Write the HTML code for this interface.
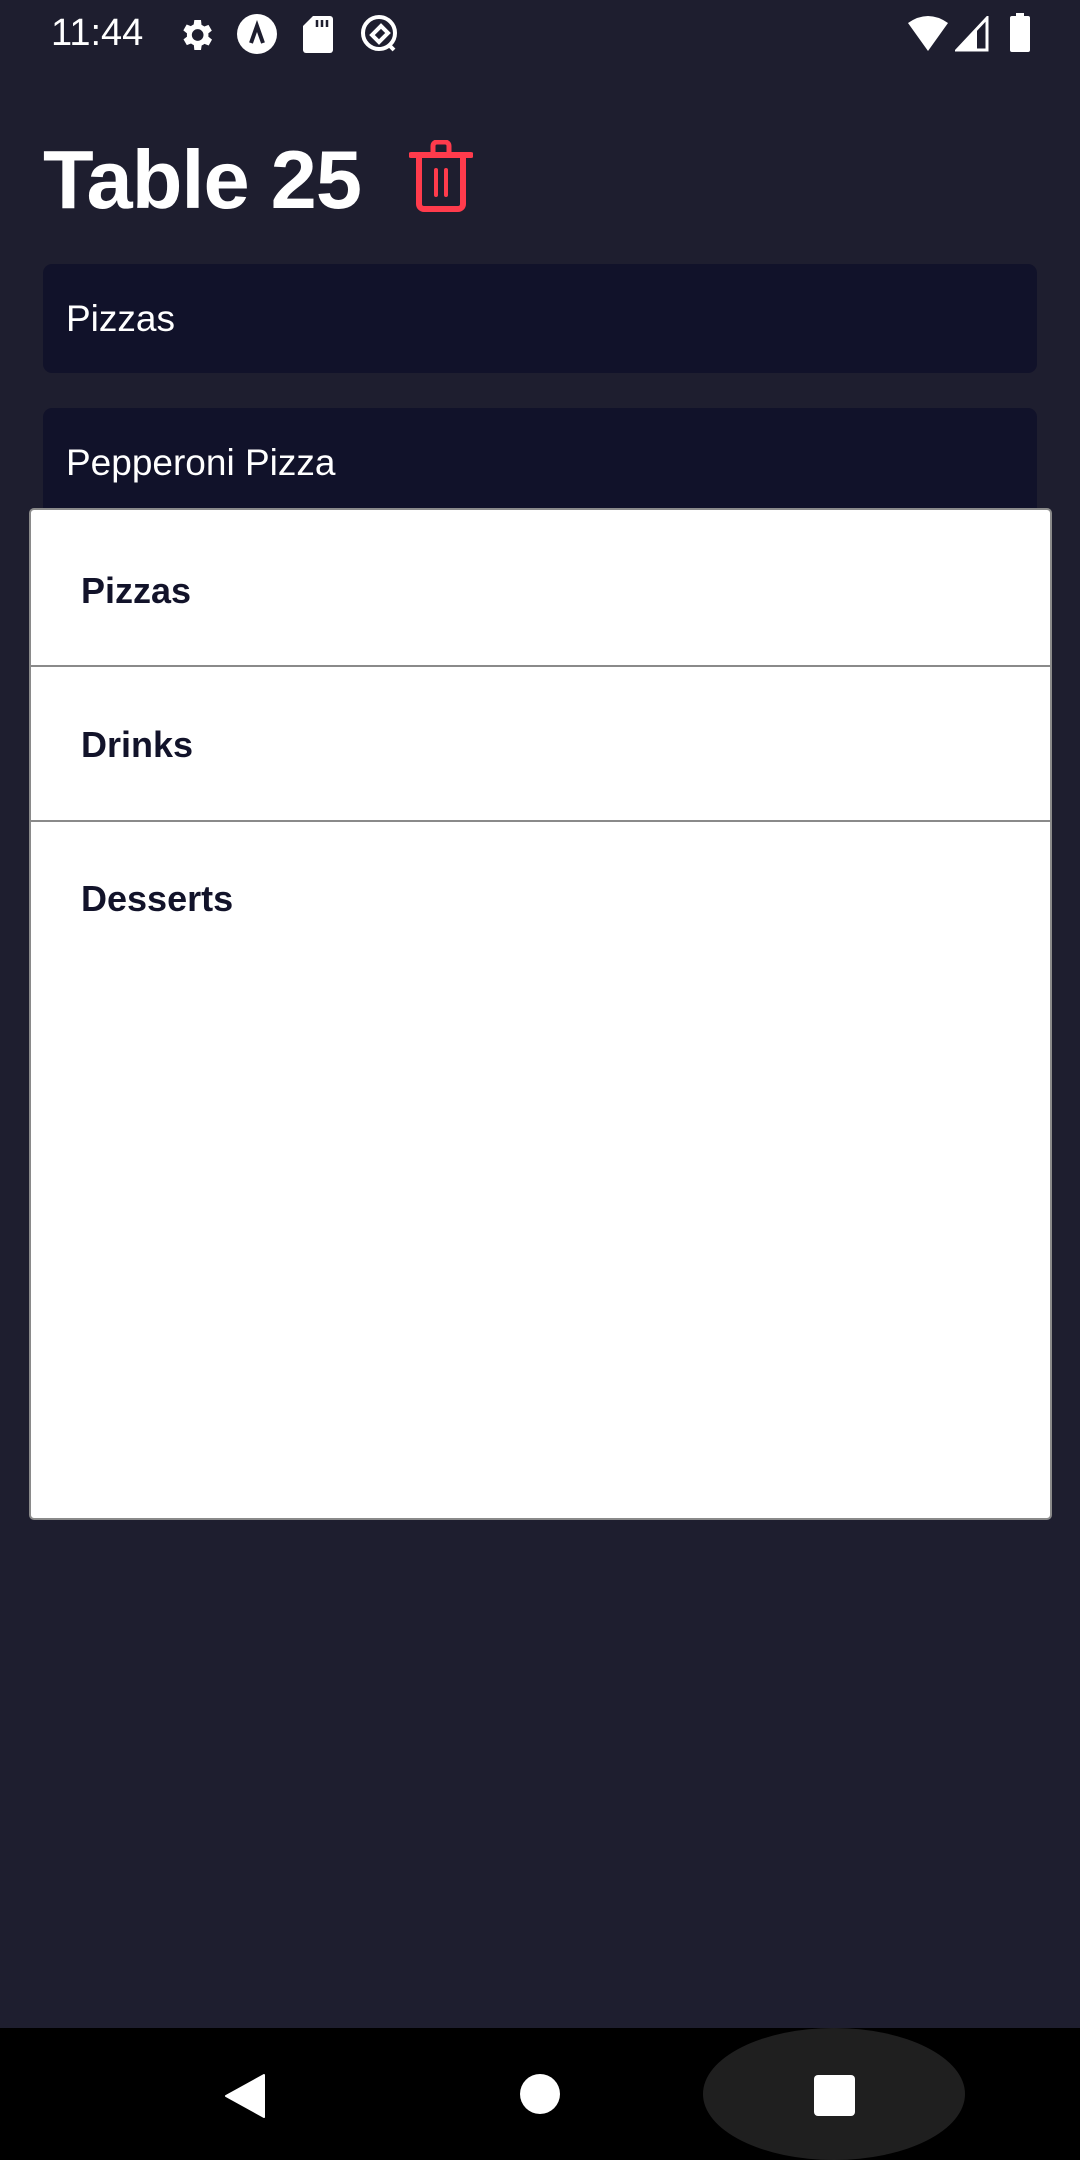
<!DOCTYPE html>
<html><head><meta charset="utf-8"><style>
*{margin:0;padding:0;box-sizing:border-box}
body{width:1080px;height:2160px;background:#1e1e2f;font-family:"Liberation Sans",sans-serif;position:relative;overflow:hidden}
.a{position:absolute}
.field{position:absolute;left:43px;width:994px;background:#11122a;border-radius:9px;color:#fff;font-size:37px;padding-left:23px;display:flex;align-items:center}
.item{position:absolute;left:0;width:100%;color:#12132a;font-weight:bold;font-size:36px;padding-left:50px;display:flex;align-items:center}
.sep{position:absolute;left:0;width:100%;height:2px;background:#8a8a8a}
</style></head><body>
<div class="a" style="left:51px;top:12px;color:#fff;font-size:38px">11:44</div>
<svg class="a" style="left:176px;top:15px" width="40" height="40" viewBox="0 0 24 24"><path fill="#fff" d="M19.4 13a7.5 7.5 0 000-2l2.1-1.6-2-3.5-2.5 1a7 7 0 00-1.7-1L15 3h-4l-.4 2.7a7 7 0 00-1.7 1l-2.5-1-2 3.5L6.6 11a7.5 7.5 0 000 2l-2.1 1.6 2 3.5 2.5-1a7 7 0 001.7 1L11 21h4l.4-2.7a7 7 0 001.7-1l2.5 1 2-3.5zM13 15.5a3.5 3.5 0 110-7 3.5 3.5 0 010 7z"/></svg>
<svg class="a" style="left:236px;top:13px" width="42" height="42" viewBox="0 0 42 42"><circle cx="21" cy="21" r="20" fill="#fff"/><path d="M15 30l6-17 6 17" stroke="#1e1e2f" stroke-width="4" fill="none"/></svg>
<svg class="a" style="left:303px;top:16px" width="30" height="37" viewBox="0 0 30 37"><path fill="#fff" d="M10 0h17a3 3 0 013 3v31a3 3 0 01-3 3H3a3 3 0 01-3-3V10z"/><path d="M14 4v7M19 4v7M24 4v7" stroke="#1e1e2f" stroke-width="2.5"/></svg>
<svg class="a" style="left:360px;top:14px" width="40" height="40" viewBox="0 0 40 40"><circle cx="19" cy="19" r="16" stroke="#fff" stroke-width="4" fill="none"/><path d="M12 21l9-9 7 7-9 9z" stroke="#fff" stroke-width="4" fill="none"/><path d="M28 30l6 6" stroke="#fff" stroke-width="4"/></svg>
<svg class="a" style="left:908px;top:15px" width="40" height="36" viewBox="0 0 40 36"><path fill="#fff" d="M0 8Q20-6 40 8L20 36z"/></svg>
<svg class="a" style="left:955px;top:16px" width="34" height="36" viewBox="0 0 34 36"><path d="M32 2L2 34h30z" stroke="#fff" stroke-width="3" fill="none"/><path d="M2 34L22 13v21z" fill="#fff"/></svg>
<div class="a" style="left:1010px;top:16px;width:20px;height:36px;background:#fff;border-radius:2px"></div>
<div class="a" style="left:1016px;top:13px;width:8px;height:4px;background:#fff"></div>

<div class="a" style="left:43px;top:132px;color:#fff;font-size:83px;font-weight:bold;letter-spacing:-1px">Table 25</div>
<svg class="a" style="left:409px;top:140px" width="64" height="72" viewBox="0 0 64 72"><path d="M24 12V6a4 4 0 014-4h8a4 4 0 014 4v6" stroke="#ff3b4c" stroke-width="5" fill="none"/><path d="M2 15h60" stroke="#ff3b4c" stroke-width="6" stroke-linecap="round"/><path d="M10 16v48a5 5 0 005 5h34a5 5 0 005-5V16" stroke="#ff3b4c" stroke-width="6" fill="none"/><path d="M27 30v25M37 30v25" stroke="#ff3b4c" stroke-width="4" stroke-linecap="round"/></svg>

<div class="field" style="top:264px;height:109px">Pizzas</div>
<div class="field" style="top:408px;height:160px;align-items:flex-start;padding-top:34px">Pepperoni Pizza</div>

<div class="a" style="left:29px;top:508px;width:1023px;height:1012px;background:#fff;border:2px solid #8a8a8a;border-radius:5px">
<div class="item" style="top:26px;height:110px">Pizzas</div>
<div class="sep" style="top:155px"></div>
<div class="item" style="top:180px;height:110px">Drinks</div>
<div class="sep" style="top:310px"></div>
<div class="item" style="top:334px;height:110px">Desserts</div>
</div>

<div class="a" style="left:0;top:2028px;width:1080px;height:132px;background:#000"></div>
<div class="a" style="left:703px;top:2028px;width:262px;height:132px;background:#1f1f1f;border-radius:131px/66px"></div>
<svg class="a" style="left:224px;top:2074px" width="42" height="44" viewBox="0 0 42 44"><path d="M40 1L2 22l38 21z" fill="#fff" stroke="#fff" stroke-linejoin="round" stroke-width="2"/></svg>
<div class="a" style="left:520px;top:2074px;width:40px;height:40px;border-radius:50%;background:#fff"></div>
<div class="a" style="left:814px;top:2075px;width:41px;height:41px;border-radius:4px;background:#fff"></div>
</body></html>
